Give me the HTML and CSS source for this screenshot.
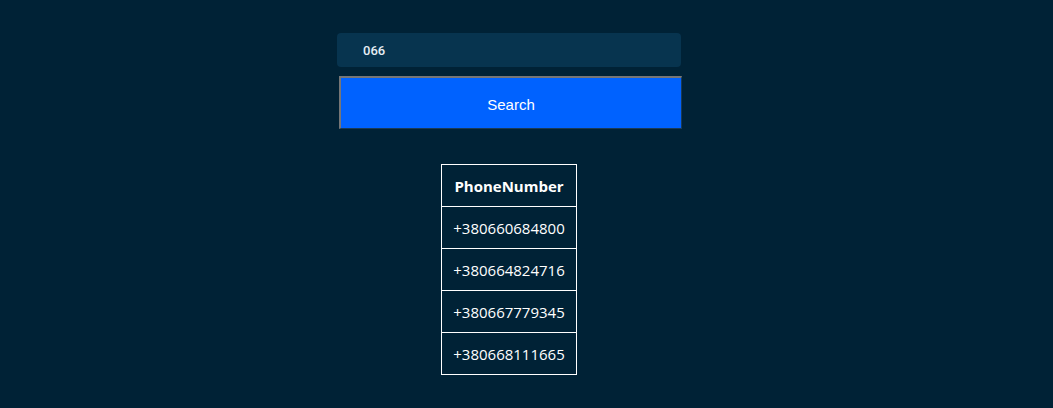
FILE: index.html
```html
<!DOCTYPE html>
<html>
<head>
<meta charset="utf-8">
<link rel="stylesheet" href="styles.css">
</head>
<body>
<div class="page">
  <form class="search">
    <input class="search-input" type="text" value="066">
    <button class="search-btn" type="button">Search</button>
  </form>
  <table class="results">
    <thead><tr><th>PhoneNumber</th></tr></thead>
    <tbody>
      <tr><td>+380660684800</td></tr>
      <tr><td>+380664824716</td></tr>
      <tr><td>+380667779345</td></tr>
      <tr><td>+380668111665</td></tr>
    </tbody>
  </table>
</div>
</body>
</html>
```
FILE: styles.css
```css
html, body {
  margin: 0;
  padding: 0;
  background: #002236;
  height: 100%;
}
.page {
  display: flex;
  flex-direction: column;
  align-items: center;
  padding: 33px 35px 0 0;
}
.search {
  display: flex;
  flex-direction: column;
  width: 344px;
  gap: 9px;
}
.search-input {
  box-sizing: border-box;
  width: 344px;
  height: 34px;
  border: none;
  border-radius: 4px;
  background: #07344f;
  color: #e6eef4;
  font-family: Roboto, sans-serif;
  font-weight: 500;
  font-size: 13px;
  padding: 0 0 0 26px;
  outline: none;
  margin: 0;
}
.search-btn {
  box-sizing: border-box;
  margin-left: 2px;
  width: 343px;
  height: 53px;
  background: #0062ff;
  color: #ffffff;
  font-family: "Liberation Sans", Arial, sans-serif;
  font-size: 15px;
  border: 2px outset #767676;
  border-right: 1px solid #1a3a55;
  border-bottom: 1px solid #1a3a55;
  padding: 2px 0 0 0;
}
.results {
  margin-top: 35px;
  border-collapse: collapse;
  color: #ffffff;
  font-family: "Open Sans", "Noto Sans", sans-serif;
  font-size: 15px;
}
.results th, .results td {
  border: 1px solid #ffffff;
  height: 41px;
  padding: 0 11px;
  text-align: center;
}
.results th {
  font-weight: 700;
}
```
